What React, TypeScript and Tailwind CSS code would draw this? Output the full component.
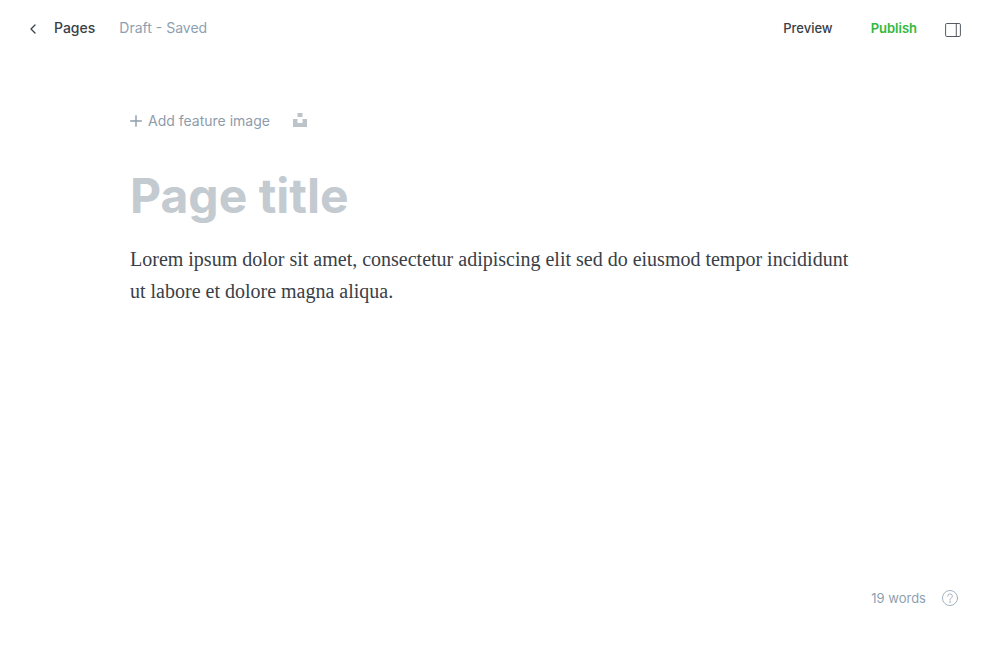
import React from "react";

function ChevronLeft() {
  return (
    <svg className="h-3 w-2" viewBox="0 0 8 12" fill="none" stroke="currentColor" strokeWidth="1.3" strokeLinecap="round" strokeLinejoin="round" aria-hidden="true">
      <path d="M6 2 2 6l4 4" />
    </svg>
  );
}

function PanelIcon() {
  return (
    <svg className="size-4" viewBox="0 0 16 16" fill="none" stroke="currentColor" aria-hidden="true">
      <rect x="0.6" y="1.5" width="14.8" height="13" rx="1.2" strokeOpacity="0.85" />
      <path d="M11.3 1.5v13" strokeOpacity="0.85" />
    </svg>
  );
}

function PlusIcon() {
  return (
    <svg className="size-3" viewBox="0 0 12 12" fill="none" stroke="currentColor" strokeWidth="1.4" strokeLinecap="round" aria-hidden="true">
      <path d="M6 .7v10.6M.7 6h10.6" />
    </svg>
  );
}

function UnsplashIcon() {
  return (
    <svg className="size-3.5" viewBox="0 0 14 14" fill="currentColor" aria-hidden="true">
      <path d="M4.5 0h5v4h-5zM0 6h4.5v4h5V6H14v8H0z" />
    </svg>
  );
}

function HelpIcon() {
  return (
    <svg className="size-4" viewBox="0 0 24 24" fill="none" stroke="currentColor" strokeLinecap="round" strokeLinejoin="round" aria-hidden="true">
      <circle cx="12" cy="12" r="11.3" strokeWidth="1.2" />
      <path d="M8.5 9.3a3.5 3.5 0 1 1 5 3.1c-1 .5-1.5 1.2-1.5 2.2v.7" strokeWidth="1.2" />
      <circle cx="12" cy="18" r=".5" strokeWidth="1" />
    </svg>
  );
}

export default function App() {
  return (
    <div className="flex min-h-screen flex-col bg-white font-['Inter',sans-serif] text-[#394047]">
      <header className="flex h-14 items-center justify-between pr-[39px] pl-7">
        <div className="flex items-center gap-6 text-sm">
          <a href="#pages" className="flex items-center gap-4 font-medium">
            <span className="flex w-2.5 justify-center pt-0.5"><ChevronLeft /></span>
            Pages
          </a>
          <span className="text-[#8e9fb2]">Draft - Saved</span>
        </div>
        <div className="flex items-center pt-0.5 text-[13px]">
          <button type="button" className="font-medium">Preview</button>
          <button type="button" className="ml-[38px] font-semibold text-[#30b940]">Publish</button>
          <button type="button" aria-label="Settings" className="ml-7 pt-0.5"><PanelIcon /></button>
        </div>
      </header>

      <main className="mx-auto w-full max-w-[740px] flex-1 pt-[55px]">
        <div className="flex items-center gap-[23px] text-sm text-[#8e9cac]">
          <button type="button" className="flex items-center gap-1.5">
            <PlusIcon />
            Add feature image
          </button>
          <button type="button" aria-label="Unsplash" className="pb-0.5 text-[#bcc4ca]"><UnsplashIcon /></button>
        </div>
        <input
          type="text"
          aria-label="Page title"
          placeholder="Page title"
          className="mt-9 block h-14 w-full text-5xl font-bold outline-none placeholder:text-[#c3cad0]"
        />
        <div
          role="textbox"
          aria-label="Page content"
          aria-multiline="true"
          contentEditable
          suppressContentEditableWarning
          className="mt-5 pr-3 font-['Liberation_Serif',serif] text-xl leading-8 outline-none"
        >
          <p>Lorem ipsum dolor sit amet, consectetur adipiscing elit sed do eiusmod tempor incididunt ut labore et dolore magna aliqua.</p>
        </div>
      </main>

      <footer className="flex items-center justify-end gap-4 pr-[42px] pb-[37px] text-[13px] text-[#8e9fb2]">
        <span>19 words</span>
        <button type="button" aria-label="Help"><HelpIcon /></button>
      </footer>
    </div>
  );
}
